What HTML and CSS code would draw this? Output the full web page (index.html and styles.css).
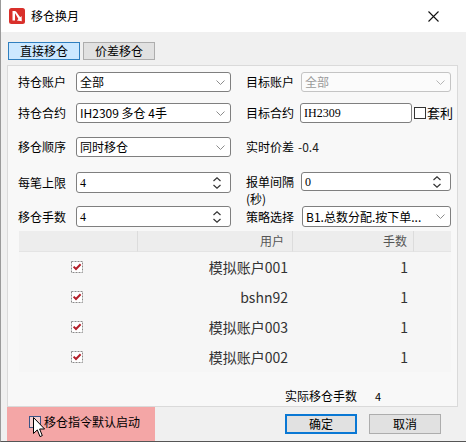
FILE: index.html
```html
<!DOCTYPE html>
<html lang="zh">
<head>
<meta charset="utf-8">
<title>移仓换月</title>
<link rel="stylesheet" href="styles.css">
</head>
<body>
<div class="window">
  <div class="titlebar">
    <svg class="app-icon" width="16" height="16" viewBox="0 0 16 16">
      <rect x="0" y="0" width="16" height="16" rx="2.5" fill="#d9302b"/>
      <path d="M3.5 3 H6 V12.5 H3.5 Z" fill="#fff"/>
      <path d="M5 3.2 L6.8 3.2 L11.2 9.2 L12.6 8 L12.8 13.2 L7.9 12.6 L9.4 11 Z" fill="#fff"/>
    </svg>
    <span class="title">移仓换月</span>
    <svg class="close" width="11" height="11" viewBox="0 0 11 11">
      <path d="M0.5 0.5 L10.5 10.5 M10.5 0.5 L0.5 10.5" stroke="#111" stroke-width="1.1" fill="none"/>
    </svg>
  </div>

  <div class="tabs">
    <div class="tab active">直接移仓</div>
    <div class="tab">价差移仓</div>
  </div>

  <div class="pane">
    <div class="row">
      <span class="lbl">持仓账户</span>
      <div class="field combo"><span>全部</span><svg class="chev" width="9" height="5" viewBox="0 0 9 5"><polyline points="0.5,0.5 4.5,4.5 8.5,0.5" fill="none" stroke="#8c8c8c"/></svg></div>
      <span class="lbl lbl-r">目标账户</span>
      <div class="field combo disabled"><span>全部</span><svg class="chev" width="9" height="5" viewBox="0 0 9 5"><polyline points="0.5,0.5 4.5,4.5 8.5,0.5" fill="none" stroke="#b5b5b5"/></svg></div>
    </div>

    <div class="row row2">
      <span class="lbl">持仓合约</span>
      <div class="field combo"><span class="mono">IH2309 多仓 4手</span><svg class="chev" width="9" height="5" viewBox="0 0 9 5"><polyline points="0.5,0.5 4.5,4.5 8.5,0.5" fill="none" stroke="#8c8c8c"/></svg></div>
      <span class="lbl lbl-r">目标合约</span>
      <div class="target">
        <div class="field text"><span class="mono">IH2309</span></div>
        <span class="box"></span><span class="box-lbl">套利</span>
      </div>
    </div>

    <div class="row row3">
      <span class="lbl">移仓顺序</span>
      <div class="field combo"><span>同时移仓</span><svg class="chev" width="9" height="5" viewBox="0 0 9 5"><polyline points="0.5,0.5 4.5,4.5 8.5,0.5" fill="none" stroke="#8c8c8c"/></svg></div>
      <span class="lbl lbl-r">实时价差</span>
      <span class="value">-0.4</span>
    </div>

    <div class="row row4">
      <span class="lbl">每笔上限</span>
      <div class="field spin"><span class="mono">4</span><svg class="arrows" width="8" height="12" viewBox="0 0 8 12"><polyline points="0.5,4 4,0.8 7.5,4" fill="none" stroke="#333" stroke-width="1.2"/><polyline points="0.5,8 4,11.2 7.5,8" fill="none" stroke="#333" stroke-width="1.2"/></svg></div>
      <span class="lbl lbl-r lbl-wrap">报单间隔<br>(秒)</span>
      <div class="field spin short"><span class="mono">0</span><svg class="arrows" width="8" height="12" viewBox="0 0 8 12"><polyline points="0.5,4 4,0.8 7.5,4" fill="none" stroke="#333" stroke-width="1.2"/><polyline points="0.5,8 4,11.2 7.5,8" fill="none" stroke="#333" stroke-width="1.2"/></svg></div>
    </div>

    <div class="row row5">
      <span class="lbl">移仓手数</span>
      <div class="field spin"><span class="mono">4</span><svg class="arrows" width="8" height="12" viewBox="0 0 8 12"><polyline points="0.5,4 4,0.8 7.5,4" fill="none" stroke="#333" stroke-width="1.2"/><polyline points="0.5,8 4,11.2 7.5,8" fill="none" stroke="#333" stroke-width="1.2"/></svg></div>
      <span class="lbl lbl-r">策略选择</span>
      <div class="field combo strat"><span class="mono">B1.总数分配.按下单...</span><svg class="chev" width="9" height="5" viewBox="0 0 9 5"><polyline points="0.5,0.5 4.5,4.5 8.5,0.5" fill="none" stroke="#8c8c8c"/></svg></div>
    </div>

    <div class="table">
      <div class="th"></div>
      <div class="th">用户</div>
      <div class="th">手数</div>
      <div class="th last"></div>

      <div class="td chk"><svg width="12" height="12" viewBox="0 0 12 12"><rect x="0.5" y="0.5" width="11" height="11" fill="#fff" stroke="#8a8a8a" stroke-dasharray="2 1"/><polyline points="2.6,5.6 5,8 9.6,3.2" fill="none" stroke="#b3202a" stroke-width="2"/></svg></div>
      <div class="td name">模拟账户001</div>
      <div class="td qty">1</div>
      <div class="td"></div>

      <div class="td chk"><svg width="12" height="12" viewBox="0 0 12 12"><rect x="0.5" y="0.5" width="11" height="11" fill="#fff" stroke="#8a8a8a" stroke-dasharray="2 1"/><polyline points="2.6,5.6 5,8 9.6,3.2" fill="none" stroke="#b3202a" stroke-width="2"/></svg></div>
      <div class="td name">bshn92</div>
      <div class="td qty">1</div>
      <div class="td"></div>

      <div class="td chk"><svg width="12" height="12" viewBox="0 0 12 12"><rect x="0.5" y="0.5" width="11" height="11" fill="#fff" stroke="#8a8a8a" stroke-dasharray="2 1"/><polyline points="2.6,5.6 5,8 9.6,3.2" fill="none" stroke="#b3202a" stroke-width="2"/></svg></div>
      <div class="td name">模拟账户003</div>
      <div class="td qty">1</div>
      <div class="td"></div>

      <div class="td chk"><svg width="12" height="12" viewBox="0 0 12 12"><rect x="0.5" y="0.5" width="11" height="11" fill="#fff" stroke="#8a8a8a" stroke-dasharray="2 1"/><polyline points="2.6,5.6 5,8 9.6,3.2" fill="none" stroke="#b3202a" stroke-width="2"/></svg></div>
      <div class="td name">模拟账户002</div>
      <div class="td qty">1</div>
      <div class="td"></div>
    </div>

    <div class="summary"><span>实际移仓手数</span><span class="sum-val">4</span></div>
  </div>

  <div class="footer">
    <div class="autostart"><span class="cb"></span><span class="cb-lbl">移仓指令默认启动</span></div>
    <div class="buttons">
      <div class="btn primary">确定</div>
      <div class="btn">取消</div>
    </div>
  </div>

  <svg class="cursor" width="13" height="21" viewBox="0 0 13 21">
    <path d="M0.5 0.5 L0.5 16.5 L4.3 12.9 L7 19.6 L9.3 18.6 L6.6 12 L11.6 12 Z" fill="#fff" stroke="#000" stroke-width="1" stroke-linejoin="miter"/>
  </svg>
</div>
</body>
</html>
```

FILE: styles.css
```css
html, body {
  margin: 0;
  padding: 0;
}

body {
  width: 466px;
  height: 442px;
  overflow: hidden;
  background: #f0f0f0;
  font-family: "Noto Sans CJK SC", "Noto Sans", sans-serif;
  font-size: 12px;
  color: #000;
}

.window {
  position: relative;
  width: 466px;
  height: 442px;
  box-sizing: border-box;
  border-left: 1px solid #9a9a9a;
  border-bottom: 1px solid #555;
  background: #f0f0f0;
}

/* title bar */
.titlebar {
  height: 32px;
  background: #fff;
  display: flex;
  align-items: center;
}

.app-icon {
  margin-left: 8px;
  flex: none;
}

.title {
  margin-left: 6px;
  font-size: 12px;
  line-height: 16px;
}

.close {
  margin-left: auto;
  margin-right: 27px;
}

/* tabs */
.tabs {
  display: flex;
  gap: 3px;
  margin: 10px 0 0 7px;
}

.tab {
  width: 72px;
  height: 18px;
  box-sizing: border-box;
  border: 1px solid #adadad;
  background: #e1e1e1;
  display: flex;
  align-items: center;
  justify-content: center;
  line-height: 16px;
}

.tab.active {
  background: #cce8ff;
  border-color: #2f7fbf;
}

/* pane */
.pane {
  margin: 5px 0 0 6px;
  width: 451px;
  height: 342px;
  box-sizing: border-box;
  border: 1px solid #dadada;
  background: #f8f8f8;
  padding: 6px 6px 0 10px;
}

.row {
  display: grid;
  grid-template-columns: 58px 155px 70px 150px;
  grid-template-rows: 20px;
  height: 20px;
  align-items: center;
}

.row2 { margin-top: 11px; }
.row3 { margin-top: 14px; }
.row4 { margin-top: 15px; height: 21px; grid-template-rows: 21px; }
.row5 { margin-top: 13px; height: 21px; grid-template-rows: 21px; }

.lbl {
  line-height: 16px;
  white-space: nowrap;
}

.lbl-r {
  padding-left: 15px;
}

.lbl-wrap {
  align-self: start;
  margin-top: 1px;
  line-height: 17px;
}

.field {
  height: 100%;
  box-sizing: border-box;
  border: 1px solid #7f7f7f;
  border-radius: 3px;
  background: #fff;
  display: flex;
  align-items: center;
  justify-content: space-between;
  padding: 0 5px 0 3px;
  line-height: 16px;
  white-space: nowrap;
  overflow: hidden;
}

.combo.disabled {
  border-color: #c4c4c4;
  background: #fbfbfb;
  color: #9a9a9a;
}

.combo.strat {
  margin-left: 1px;
}

.mono {
  font-family: "Liberation Serif", "Noto Sans CJK SC", serif;
  font-size: 12px;
}

.combo .mono,
.combo.strat .mono {
  font-family: "Noto Sans CJK SC", sans-serif;
}

.spin {
  padding-right: 9px;
}

.spin.short {
  height: 19px;
  align-self: start;
}

.target {
  display: flex;
  align-items: center;
  height: 100%;
  width: 160px;
  white-space: nowrap;
}

.field.text {
  width: 112px;
  margin-left: -1px;
  flex: none;
}

.box {
  width: 12px;
  height: 12px;
  box-sizing: border-box;
  border: 1px solid #333;
  background: #fff;
  margin-left: 2px;
  flex: none;
}

.box-lbl {
  flex: none;
  margin-left: 1px;
  font-size: 13px;
  line-height: 16px;
}

.value {
  margin-left: -3px;
  color: #222;
  line-height: 16px;
}

/* table */
.table {
  margin: 4px 0 0 1px;
  width: 432px;
  display: grid;
  grid-template-columns: 119px 155px 121px 37px;
  grid-auto-rows: 30px;
  grid-template-rows: 21px;
  background: #f6f6f6;
}

.th {
  background: #ededed;
  border-right: 1px solid #dcdcdc;
  border-bottom: 1px solid #e4e4e4;
  color: #555;
  text-align: right;
  line-height: 20px;
  box-sizing: border-box;
}

.th:nth-child(2) { padding-right: 8px; }
.th:nth-child(3) { padding-right: 6px; }
.th.last { border-right: none; }

.td {
  display: flex;
  align-items: center;
  font-size: 14px;
  color: #333;
}

.td.chk {
  justify-content: center;
  padding-right: 3px;
}

.td.name {
  justify-content: flex-end;
  padding-right: 5px;
}

.td.qty {
  justify-content: flex-end;
  padding-right: 6px;
}

.summary {
  margin-top: 17px;
  padding-left: 267px;
  line-height: 14px;
  display: flex;
}

.sum-val {
  margin-left: 18px;
  font-size: 11px;
}

/* footer */
.footer {
  display: flex;
  margin-left: 6px;
  height: 34px;
}

.autostart {
  width: 148px;
  height: 34px;
  background: #f4a6a6;
  display: flex;
  align-items: flex-start;
  box-sizing: border-box;
  padding: 9px 0 0 22px;
}

.cb {
  width: 12px;
  height: 12px;
  box-sizing: border-box;
  border: 1px solid #3b5486;
  background: #f7d0d0;
  flex: none;
}

.cb-lbl {
  margin-left: 3px;
  line-height: 13px;
  margin-top: -1px;
}

.buttons {
  margin-left: auto;
  margin-right: 25px;
  padding-top: 7px;
  display: flex;
  gap: 12px;
}

.btn {
  width: 72px;
  height: 20px;
  box-sizing: border-box;
  border: 1px solid #adadad;
  background: #e1e1e1;
  display: flex;
  align-items: center;
  justify-content: center;
  line-height: 16px;
}

.btn.primary {
  border: 2px solid #0a78d4;
}

.cursor {
  position: absolute;
  left: 32px;
  top: 417px;
}
```
